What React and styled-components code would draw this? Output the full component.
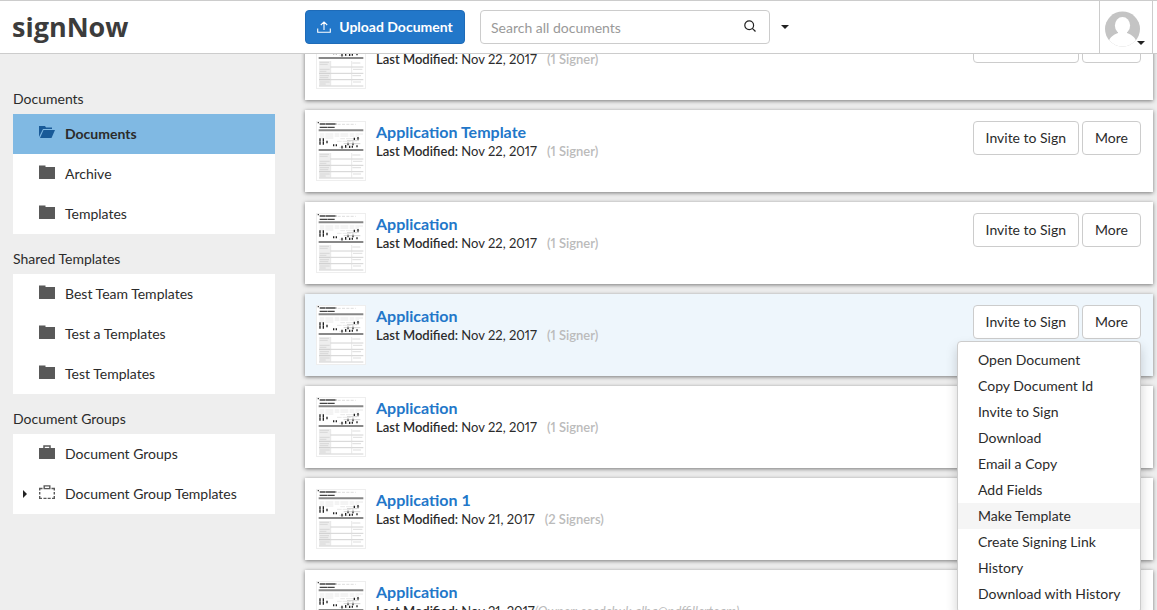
import React from 'react'
import styled, { createGlobalStyle, css } from 'styled-components'

const GlobalStyle = createGlobalStyle`
  * {
    box-sizing: border-box;
  }

  body {
    margin: 0;
    background: #eee;
    color: #2b2b2b;
    font: 14px/20px Lato, 'Open Sans', sans-serif;
  }

  button,
  input {
    font: inherit;
  }
`

const Page = styled.div`
  height: 100vh;
  display: flex;
  flex-direction: column;
  overflow: hidden;
`

const Header = styled.header`
  flex: none;
  height: 54px;
  padding: 0 4px 0 12px;
  display: flex;
  align-items: center;
  background: #fff;
  border-top: 1px solid #ccc;
  border-bottom: 1px solid #ccc;
`

const Logo = styled.a`
  width: 293px;
  color: #3c3c3c;
  font: bold 27px/34px 'Open Sans', sans-serif;
  text-decoration: none;
`

const UploadButton = styled.button`
  width: 160px;
  height: 34px;
  padding: 0;
  display: flex;
  align-items: center;
  justify-content: center;
  gap: 8px;
  background: #2277c9;
  border: 1px solid #1e6bb8;
  border-radius: 4px;
  color: #fff;
  font-weight: bold;
  cursor: pointer;
`

const SearchBox = styled.form`
  width: 290px;
  height: 34px;
  margin-left: 15px;
  padding: 0 13px 0 10px;
  display: flex;
  align-items: center;
  border: 1px solid #ccc;
  border-radius: 4px;
`

const SearchInput = styled.input`
  flex: 1;
  min-width: 0;
  height: 32px;
  padding: 1px 0 0;
  border: none;
  outline: none;
  background: none;

  &::placeholder {
    color: #999;
    opacity: 1;
  }
`

const IconButton = styled.button`
  padding: 0;
  display: flex;
  background: none;
  border: none;
  cursor: pointer;
`

const SearchButton = styled(IconButton)`
  padding-bottom: 3px;
`

const SearchOptions = styled(IconButton)`
  padding: 10px 11px;
`

const Account = styled(IconButton)`
  width: 54px;
  height: 52px;
  margin-left: auto;
  padding-right: 2px;
  align-items: center;
  justify-content: center;
  border: solid #ccc;
  border-width: 0 1px;
`

const Body = styled.div`
  flex: 1;
  min-height: 0;
  padding: 0 4px 0 13px;
  display: flex;
  gap: 30px;
`

const Sidebar = styled.nav`
  flex: none;
  width: 262px;
  padding-top: 20px;
`

const SectionTitle = styled.h2`
  margin: 0;
  padding: 15px 0 5px;
  font-size: 14px;
  line-height: 20px;
  font-weight: normal;
`

const FolderList = styled.ul`
  margin: 0;
  padding: 0;
  list-style: none;
  background: #fff;
`

const FolderLink = styled.a`
  height: 40px;
  display: grid;
  grid-template-columns: 26px 26px 1fr;
  align-items: center;
  color: #2b2b2b;
  text-decoration: none;

  ${props => props.$active && css`
    background: #80b9e3;
    font-weight: bold;
  `}
`

const Expander = styled.span`
  padding-left: 10px;
  display: flex;
`

const Main = styled.main`
  flex: 1;
  min-width: 0;
  margin: 0 -4px;
  padding: 0 4px;
  overflow: hidden;
`

const DocumentList = styled.div`
  margin-top: -36px;
  display: flex;
  flex-direction: column;
  gap: 10px;
`

const Card = styled.article`
  flex: none;
  height: 82px;
  padding: 11px 12px 11px 11px;
  display: flex;
  align-items: flex-start;
  gap: 10px;
  background: ${props => props.$active ? '#eef6fc' : '#fff'};
  box-shadow: 0 1px 4px rgba(0, 0, 0, 0.5);
`

const Thumbnail = styled.svg`
  flex: none;
  width: 50px;
  height: 60px;
  background: #fff;
  border: 1px solid #eee;
`

const Details = styled.div`
  flex: 1;
  min-width: 0;
`

const DocumentName = styled.a`
  display: block;
  color: #2277c9;
  font-size: 16px;
  font-weight: bold;
  line-height: 22px;
  text-decoration: none;
`

const Meta = styled.div`
  display: flex;
  font-size: 13px;
  line-height: 16px;
  font-variant-numeric: proportional-nums;
  white-space: pre;
`

const Label = styled.span`
  font-weight: 600;
`

const Note = styled.span`
  margin-left: ${props => props.$owner ? 0 : 10}px;
  color: #bbb;
  font-style: ${props => props.$owner ? 'italic' : 'normal'};
  font-weight: ${props => props.$owner ? 400 : 600};
`

const Actions = styled.div`
  display: flex;
  gap: 3px;
`

const Button = styled.button`
  height: 34px;
  padding: 0 12px;
  background: #fff;
  border: 1px solid #ccc;
  border-radius: 4px;
  color: #2b2b2b;
  cursor: pointer;
`

const Dropdown = styled.div`
  position: relative;
`

const Menu = styled.ul`
  position: absolute;
  top: 36px;
  right: 0;
  z-index: 1;
  width: 184px;
  margin: 0;
  padding: 5px 0;
  list-style: none;
  background: #fff;
  border: 1px solid #ccc;
  border-radius: 4px;
  box-shadow: 0 6px 12px rgba(0, 0, 0, 0.18);
`

const MenuItem = styled.button`
  width: 100%;
  height: 26px;
  padding: 0 0 0 20px;
  display: block;
  background: ${props => props.$active ? '#f5f5f5' : 'none'};
  border: none;
  color: #2b2b2b;
  text-align: left;
  white-space: nowrap;
  cursor: pointer;
`

const UploadIcon = () => (
  <svg width='14' height='12' viewBox='0 0 14 12' fill='none' stroke='#fff' strokeWidth='1.1'>
    <path d='M.7 7.5v3.8h12.6V7.5M7 9V1M3.8 4 7 .9 10.2 4' />
  </svg>
)

const SearchIcon = () => (
  <svg width='12' height='12' viewBox='0 0 12 12' fill='none' stroke='#222' strokeWidth='1.2'>
    <circle cx='5.2' cy='5.2' r='4.4' />
    <path d='m8.3 8.3 3.2 3.2' />
  </svg>
)

const CaretDown = () => (
  <svg width='8' height='4' viewBox='0 0 8 4'>
    <path d='M0 0h8L4 4z' fill='#222' />
  </svg>
)

const Avatar = () => (
  <svg width='42' height='40' viewBox='0 0 42 40'>
    <defs>
      <clipPath id='face'>
        <circle cx='18.5' cy='22' r='17.5' />
      </clipPath>
    </defs>
    <g clipPath='url(#face)'>
      <path fill='#c4c4c4' d='M0 0h42v40H0z' />
      <ellipse cx='18.5' cy='18.5' rx='7.6' ry='8.5' fill='#fff' />
      <path fill='#fff' d='M14 24h9v2c5 2 8 4 9.5 9v5h-28v-5c1.5-5 4.5-7 9.5-9z' />
    </g>
    <path d='M33 34h8l-4 4z' fill='#222' />
  </svg>
)

const icons = {
  open: (
    <g fill='#195a98'>
      <path d='M0 1h6l1 1.5h6V4H4L0 12z' />
      <path d='M4.5 5H16l-3.500 8H1z' />
    </g>
  ),
  folder: <path fill='#595959' d='M0 .6h6.500V2H16v12H0z' />,
  group: (
    <g>
      <path fill='#595959' d='M0 3h16v11H0z' />
      <path fill='none' stroke='#595959' strokeWidth='1.5' d='M5 3.2V.9h6v2.300' />
    </g>
  ),
  groupTemplate: (
    <g fill='none' stroke='#595959' strokeWidth='1.4'>
      <path d='M.7 5.500v-2h2.800M12.500 3.500h2.800v2M.7 11v2.400H3M13 13.400h2.300V11M.7 7v2.500M15.300 7v2.500M4.500 13.400h3M8.700 13.400h3' />
      <path d='M4.500 3.600h7M5.200 3.600V.9h5.600v2.700' />
    </g>
  )
}

const sections = [
  {
    title: 'Documents',
    folders: [
      { name: 'Documents', icon: 'open', active: true },
      { name: 'Archive', icon: 'folder' },
      { name: 'Templates', icon: 'folder' }
    ]
  },
  {
    title: 'Shared Templates',
    folders: [
      { name: 'Best Team Templates', icon: 'folder' },
      { name: 'Test a Templates', icon: 'folder' },
      { name: 'Test Templates', icon: 'folder' }
    ]
  },
  {
    title: 'Document Groups',
    folders: [
      { name: 'Document Groups', icon: 'group' },
      { name: 'Document Group Templates', icon: 'groupTemplate', expandable: true }
    ]
  }
]

const documents = [
  { id: 1, name: 'Application', date: 'Nov 22, 2017', note: '(1 Signer)' },
  { id: 2, name: 'Application Template', date: 'Nov 22, 2017', note: '(1 Signer)' },
  { id: 3, name: 'Application', date: 'Nov 22, 2017', note: '(1 Signer)' },
  { id: 4, name: 'Application', date: 'Nov 22, 2017', note: '(1 Signer)', open: true },
  { id: 5, name: 'Application', date: 'Nov 22, 2017', note: '(1 Signer)' },
  { id: 6, name: 'Application 1', date: 'Nov 21, 2017', note: '(2 Signers)' },
  { id: 7, name: 'Application', date: 'Nov 21, 2017', note: '(Owner: seadchuk.alba@pdffillerteam)', owner: true }
]

const menuItems = [
  'Open Document',
  'Copy Document Id',
  'Invite to Sign',
  'Download',
  'Email a Copy',
  'Add Fields',
  'Make Template',
  'Create Signing Link',
  'History',
  'Download with History'
]

const FormPreview = () => (
  <Thumbnail viewBox='0 0 144 174' aria-hidden='true'>
    <g stroke='#444' strokeWidth='4'>
      <path d='M8 6h50' strokeDasharray='16 1 30 1' />
      <path d='M8 16h46' strokeDasharray='22 1' />
      <path d='M2 2h4' />
    </g>
    <path d='M62 7h54' stroke='#ccc' strokeWidth='2' strokeDasharray='9 4' />
    <path d='M5 25h134M5 84h134' stroke='#888' strokeWidth='6' />
    <path d='M8 36h130M8 42h118M8 48h44M70 50h60M60 58h50M66 76h34' stroke='#ddd' strokeWidth='2' strokeDasharray='14 3 24 4' />
    <path d='M9 49v20M19 49v20M30 56v8M50 67v6M58 67v6M75 71v10M86 69v9M93 62v8M98 71v7M108 62v8M106 71v6M120 70v6M112 47v7M123 45v10' stroke='#222' strokeWidth='4' strokeDasharray='8 1' />
    <path d='M80 65h50M90 56h30' stroke='#bbb' strokeWidth='2' />
    <path d='M6 93h34v74H6z' fill='#eee' />
    <path d='M40 111h99M6 130h133M6 149h133M6 168h133' stroke='#bbb' strokeWidth='2' />
    <path d='M8 97h28M8 103h24M8 118h30M8 124h20M8 137h28M8 143h26M8 156h30M8 162h18M106 99h24M108 118h28M106 137h26M108 156h24' stroke='#ccc' strokeWidth='2' />
    <path d='M41 93v74M104 93v74' stroke='#ddd' strokeWidth='2' />
  </Thumbnail>
)

const Folder = ({ folder }) => (
  <li>
    <FolderLink href='#' $active={folder.active}>
      <Expander>
        {folder.expandable && (
          <svg width='4' height='8' viewBox='0 0 4 8'>
            <path d='M0 0v8l4-4z' fill='#222' />
          </svg>
        )}
      </Expander>
      <svg width='16' height='18' viewBox='0 0 16 18'>{icons[folder.icon]}</svg>
      {folder.name}
    </FolderLink>
  </li>
)

const DocumentCard = ({ doc }) => (
  <Card $active={doc.open}>
    <FormPreview />
    <Details>
      <DocumentName href='#'>{doc.name}</DocumentName>
      <Meta>
        <Label>Last Modified: </Label>
        <span>{doc.date}</span>
        <Note $owner={doc.owner}>{doc.note}</Note>
      </Meta>
    </Details>
    <Actions>
      <Button type='button'>Invite to Sign</Button>
      <Dropdown>
        <Button type='button' aria-haspopup='true'>More</Button>
        {doc.open && (
          <Menu>
            {menuItems.map(item => (
              <li key={item}>
                <MenuItem type='button' $active={item === 'Make Template'}>{item}</MenuItem>
              </li>
            ))}
          </Menu>
        )}
      </Dropdown>
    </Actions>
  </Card>
)

const App = () => (
  <Page>
    <GlobalStyle />
    <Header>
      <Logo href='#'>signNow</Logo>
      <UploadButton type='button'>
        <UploadIcon />
        Upload Document
      </UploadButton>
      <SearchBox role='search'>
        <SearchInput type='text' placeholder='Search all documents' aria-label='Search all documents' />
        <SearchButton type='button' aria-label='Search'>
          <SearchIcon />
        </SearchButton>
      </SearchBox>
      <SearchOptions type='button' aria-label='Search options'>
        <CaretDown />
      </SearchOptions>
      <Account type='button' aria-label='Account'>
        <Avatar />
      </Account>
    </Header>
    <Body>
      <Sidebar>
        {sections.map(section => (
          <section key={section.title}>
            <SectionTitle>{section.title}</SectionTitle>
            <FolderList>
              {section.folders.map(folder => <Folder key={folder.name} folder={folder} />)}
            </FolderList>
          </section>
        ))}
      </Sidebar>
      <Main>
        <DocumentList>
          {documents.map(doc => <DocumentCard key={doc.id} doc={doc} />)}
        </DocumentList>
      </Main>
    </Body>
  </Page>
)

export default App
